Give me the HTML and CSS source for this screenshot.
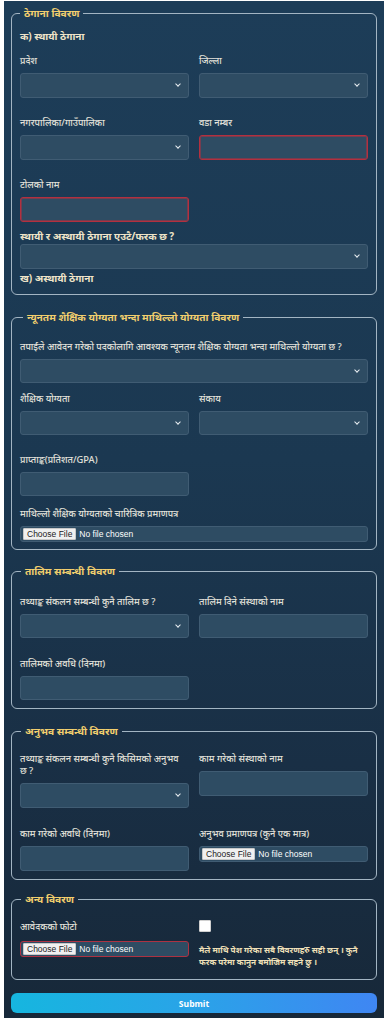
FILE: index.html
```html
<!DOCTYPE html>
<html lang="ne">
<head>
<meta charset="utf-8">
<title>Form</title>
<link rel="stylesheet" href="styles.css">
</head>
<body>
<form class="page">
  <fieldset class="box box-1">
    <legend>ठेगाना विवरण</legend>
    <div class="sub">क) स्थायी ठेगाना</div>
    <div class="row r1">
      <div class="grp"><label>प्रदेश</label><div class="sel"><select class="field"></select></div></div>
      <div class="grp"><label>जिल्ला</label><div class="sel"><select class="field"></select></div></div>
    </div>
    <div class="row r2">
      <div class="grp"><label>नगरपालिका/गाउँपालिका</label><div class="sel"><select class="field"></select></div></div>
      <div class="grp"><label>वडा नम्बर</label><input class="field err" type="text"></div>
    </div>
    <div class="row r3">
      <div class="grp"><label>टोलको नाम</label><input class="field err" type="text"></div>
    </div>
    <div class="grp full">
      <label class="strong">स्थायी र अस्थायी ठेगाना एउटै/फरक छ ?</label>
      <div class="sel"><select class="field"></select></div>
    </div>
    <div class="sub sub-b">ख) अस्थायी ठेगाना</div>
  </fieldset>

  <fieldset class="box box-2">
    <legend>न्यूनतम शैक्षिक योग्यता भन्दा माथिल्लो योग्यता विवरण</legend>
    <div class="grp full q1">
      <label>तपाईंले आवेदन गरेको पदकोलागि आवश्यक न्यूनतम शैक्षिक योग्यता भन्दा माथिल्लो योग्यता छ ?</label>
      <div class="sel"><select class="field"></select></div>
    </div>
    <div class="row r4">
      <div class="grp"><label>शैक्षिक योग्यता</label><div class="sel"><select class="field"></select></div></div>
      <div class="grp"><label>संकाय</label><div class="sel"><select class="field"></select></div></div>
    </div>
    <div class="row r5">
      <div class="grp"><label>प्राप्ताङ्क(प्रतिशत/GPA)</label><input class="field" type="text"></div>
    </div>
    <div class="grp full">
      <label>माथिल्लो शैक्षिक योग्यताको चारित्रिक प्रमाणपत्र</label>
      <input class="file" type="file">
    </div>
  </fieldset>

  <fieldset class="box box-3">
    <legend>तालिम सम्बन्धी विवरण</legend>
    <div class="row r6">
      <div class="grp"><label>तथ्याङ्क संकलन सम्बन्धी कुनै तालिम छ ?</label><div class="sel"><select class="field"></select></div></div>
      <div class="grp"><label>तालिम दिने संस्थाको नाम</label><input class="field" type="text"></div>
    </div>
    <div class="row r7">
      <div class="grp"><label>तालिमको अवधि (दिनमा)</label><input class="field" type="text"></div>
    </div>
  </fieldset>

  <fieldset class="box box-4">
    <legend>अनुभव सम्बन्धी विवरण</legend>
    <div class="row r8">
      <div class="grp"><label>तथ्याङ्क संकलन सम्बन्धी कुनै किसिमको अनुभव छ&nbsp;?</label><div class="sel"><select class="field"></select></div></div>
      <div class="grp"><label>काम गरेको संस्थाको नाम</label><input class="field" type="text"></div>
    </div>
    <div class="row r9">
      <div class="grp"><label>काम गरेको अवधि (दिनमा)</label><input class="field" type="text"></div>
      <div class="grp"><label>अनुभव प्रमाणपत्र (कुनै एक मात्र)</label><input class="file" type="file"></div>
    </div>
  </fieldset>

  <fieldset class="box box-5">
    <legend>अन्य विवरण</legend>
    <div class="row r10">
      <div class="grp photo"><label>आवेदकको फोटो</label><input class="file err" type="file"></div>
      <div class="grp agree">
        <input class="check" type="checkbox">
        <p class="decl">मैले माथि पेश गरेका सबै विवरणहरु सही छन् । कुनै फरक परेमा कानुन बमोजिम सहने छु ।</p>
      </div>
    </div>
  </fieldset>

  <button class="submit" type="button">Submit</button>
</form>
</body>
</html>
```

FILE: styles.css
```css
* { box-sizing: border-box; }
html, body { margin: 0; padding: 0; background: #ffffff; }
body { font-family: "Noto Sans", "Liberation Sans", sans-serif; }

.page {
  margin: 1px 5px 0 4px;
  height: 1017px;
  padding: 6px 7px 0 7px;
  background: linear-gradient(180deg, #1d3d58 0%, #1b3851 45%, #192f45 75%, #172839 100%);
  display: flex;
  flex-direction: column;
}

.box {
  margin: 0;
  border: 1px solid #a3b5c3;
  border-radius: 6px;
  padding: 0 8px 8px 8px;
  min-width: 0;
}
.box legend {
  padding: 0 4px;
  margin-left: 0;
  color: #f2cf6e;
  font-size: 10.2px;
  font-weight: 700;
  line-height: 13px;
}
.box-2 legend { margin-left: 3px; }
.box-3 legend, .box-4 legend, .box-5 legend { margin-left: 1px; }

.box-1 { padding-bottom: 9px; margin-bottom: 16px; }
.box-2 { padding-bottom: 7px; margin-bottom: 15px; }
.box-3 { padding-bottom: 8px; margin-bottom: 16px; }
.box-4 { padding-bottom: 8px; margin-bottom: 13px; }
.box-5 { padding-bottom: 11px; margin-bottom: 13px; }

.sub {
  color: #efe4c8;
  font-weight: 700;
  font-size: 10px;
  line-height: 13px;
  margin: 10px 0 12px;
}
.sub-b { margin: 3px 0 0; }

.row {
  display: grid;
  grid-template-columns: 1fr 1fr;
  column-gap: 10px;
  align-items: start;
}
.grp { display: flex; flex-direction: column; min-width: 0; }
.grp label {
  color: #e2e1da;
  font-size: 9.3px;
  font-weight: 500;
  line-height: 12px;
  margin-bottom: 6px;
}
.box-1 .grp label.strong {
  color: #efe4c8;
  font-weight: 700;
  font-size: 10px;
  margin-bottom: 2px;
}

.r1, .r2 { margin-bottom: 19px; }
.r3 { margin-bottom: 8px; }
.q1 { margin-top: 17px; margin-bottom: 10px; }
.r4 { margin-bottom: 19px; }
.r5 { margin-bottom: 12px; }
.r6 { margin-top: 18px; margin-bottom: 20px; }
.r8 { margin-top: 15px; margin-bottom: 20px; }
.r10 { margin-top: 14px; }

.field {
  display: block;
  width: 100%;
  height: 25px;
  margin: 0;
  padding: 0 8px;
  border: 1px solid #405c73;
  border-radius: 3px;
  background: #2e4c63;
  color: #e6edf2;
  font: inherit;
  font-size: 9px;
  -webkit-appearance: none;
  appearance: none;
  outline: none;
}
.box-2 .field, .box-3 .field { height: 24px; }
.grp .field.err {
  border: 1px solid #b3303f;
  box-shadow: inset 0 0 0 1px rgba(179, 48, 63, 0.55);
}

.sel { position: relative; }
.sel::after {
  content: "";
  position: absolute;
  right: 9px;
  top: 9px;
  width: 3px;
  height: 3px;
  border-right: 1.6px solid #e9eef2;
  border-bottom: 1.6px solid #e9eef2;
  transform: rotate(45deg);
  pointer-events: none;
}

.file {
  display: block;
  width: 100%;
  height: 16px;
  margin: 0;
  padding: 1px 2px;
  border: 1px solid #405c73;
  border-radius: 3px;
  background: #2e4c63;
  color: #ffffff;
  font-family: "Liberation Sans", Arial, sans-serif;
  font-size: 8.5px;
  line-height: 12px;
}
.file::file-selector-button {
  font-family: "Liberation Sans", Arial, sans-serif;
  font-size: 8.5px;
  height: 12px;
  padding: 0 3px;
  margin-right: 3px;
  border: 1px solid #c8c8c8;
  border-radius: 1px;
  background: #f0f0f0;
  color: #222;
}
.grp .file.err { border: 1px solid #ad3242; }

.photo { padding-top: 1px; }
.photo label { margin-bottom: 8px; }
.agree { align-items: flex-start; }
.check {
  -webkit-appearance: none;
  appearance: none;
  width: 12px;
  height: 12px;
  margin: 0;
  background: #ffffff;
  border: 1px solid #d0d0d0;
  border-radius: 1px;
}
.decl {
  margin: 12px 0 0;
  color: #efe0b8;
  font-weight: 700;
  font-size: 8.2px;
  line-height: 12px;
}

.submit {
  margin: 0;
  width: 100%;
  height: 20px;
  border: 0;
  border-radius: 6px;
  background: linear-gradient(90deg, #16b6df 0%, #2aa3e8 50%, #3f86f3 100%);
  color: #ffffff;
  font-family: "Open Sans", "Liberation Sans", sans-serif;
  font-weight: 700;
  font-size: 8.5px;
}
```
